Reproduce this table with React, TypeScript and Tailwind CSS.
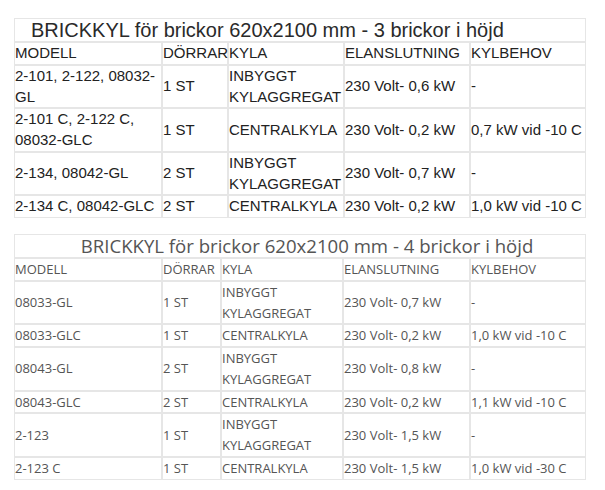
const rows3 = [
  ["2-101, 2-122, 08032-GL", "1 ST", "INBYGGT KYLAGGREGAT", "230 Volt- 0,6 kW", "-"],
  ["2-101 C, 2-122 C, 08032-GLC", "1 ST", "CENTRALKYLA", "230 Volt- 0,2 kW", "0,7 kW vid -10 C"],
  ["2-134, 08042-GL", "2 ST", "INBYGGT KYLAGGREGAT", "230 Volt- 0,7 kW", "-"],
  ["2-134 C, 08042-GLC", "2 ST", "CENTRALKYLA", "230 Volt- 0,2 kW", "1,0 kW vid -10 C"],
];

const rows4 = [
  ["08033-GL", "1 ST", "INBYGGT KYLAGGREGAT", "230 Volt- 0,7 kW", "-"],
  ["08033-GLC", "1 ST", "CENTRALKYLA", "230 Volt- 0,2 kW", "1,0 kW vid -10 C"],
  ["08043-GL", "2 ST", "INBYGGT KYLAGGREGAT", "230 Volt- 0,8 kW", "-"],
  ["08043-GLC", "2 ST", "CENTRALKYLA", "230 Volt- 0,2 kW", "1,1 kW vid -10 C"],
  ["2-123", "1 ST", "INBYGGT KYLAGGREGAT", "230 Volt- 1,5 kW", "-"],
  ["2-123 C", "1 ST", "CENTRALKYLA", "230 Volt- 1,5 kW", "1,0 kW vid -30 C"],
];

const head = ["MODELL", "DÖRRAR", "KYLA", "ELANSLUTNING", "KYLBEHOV"];

export default function App() {
  return (
    <div className="min-h-[490px] bg-white pl-[14px] pt-[18px]">
      <table className="w-[572px] table-fixed border-separate border-spacing-0 font-['Liberation_Sans',Arial,sans-serif] text-[15px] leading-[20.75px] text-[#222]">
        <colgroup>
          <col className="w-[148px]" />
          <col className="w-[66px]" />
          <col className="w-[116px]" />
          <col className="w-[126px]" />
          <col className="w-[116px]" />
        </colgroup>
        <tbody>
          <tr>
            <td colSpan={5} className="border border-[#e6e6e6] pl-[16px] text-[20px] leading-[22px] text-[#2a2a2a]">
              BRICKKYL för brickor 620x2100 mm - 3 brickor i höjd
            </td>
          </tr>
          <tr>
            {head.map((h) => (
              <td key={h} className="border border-[#e6e6e6] px-0 align-middle whitespace-nowrap overflow-visible">
                {h}
              </td>
            ))}
          </tr>
          {rows3.map((r, i) => (
            <tr key={i}>
              {r.map((c, j) => (
                <td key={j} className="border border-[#e6e6e6] px-0 align-middle">
                  {c}
                </td>
              ))}
            </tr>
          ))}
        </tbody>
      </table>

      <table className="mt-[16px] w-[572px] table-fixed border-separate border-spacing-0 font-['Open_Sans',sans-serif] text-[13px] leading-[20.75px] text-[#555]">
        <colgroup>
          <col className="w-[148px]" />
          <col className="w-[59px]" />
          <col className="w-[122px]" />
          <col className="w-[127px]" />
          <col className="w-[116px]" />
        </colgroup>
        <tbody>
          <tr>
            <td colSpan={5} className="border border-[#e6e6e6] pl-[14px] text-center text-[18.6px] leading-[22px] text-[#555]">
              BRICKKYL för brickor 620x2100 mm - 4 brickor i höjd
            </td>
          </tr>
          <tr>
            {head.map((h) => (
              <td key={h} className="border border-[#e6e6e6] px-0 align-middle whitespace-nowrap">
                {h}
              </td>
            ))}
          </tr>
          {rows4.map((r, i) => (
            <tr key={i}>
              {r.map((c, j) => (
                <td key={j} className="border border-[#e6e6e6] px-0 align-middle">
                  {c}
                </td>
              ))}
            </tr>
          ))}
        </tbody>
      </table>
    </div>
  );
}
